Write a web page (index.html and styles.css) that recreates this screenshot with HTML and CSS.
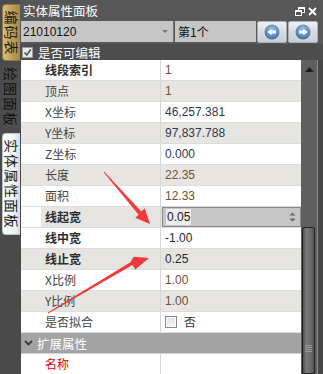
FILE: index.html
```html
<!DOCTYPE html>
<html>
<head>
<meta charset="utf-8">
<link rel="stylesheet" href="styles.css">
</head>
<body>
<div class="tabs">
  <div class="tab tab-gold"><span>编码表</span></div>
  <div class="tab tab-dark"><span>绘图面板</span></div>
  <div class="tab tab-active"><span>实体属性面板</span></div>
</div>
<div class="panel">
  <div class="titlebar">
    <span class="title">实体属性面板</span>
    <span class="winbtns">
      <svg width="10" height="9" viewBox="0 0 10 9"><rect x="3.5" y="0.5" width="6" height="5" fill="none" stroke="#fff" stroke-width="1"/><rect x="3.5" y="0.5" width="6" height="1.5" fill="#fff"/><rect x="0.5" y="3.5" width="6" height="5" fill="#565656" stroke="#fff" stroke-width="1"/><rect x="0.5" y="3.5" width="6" height="1.5" fill="#fff"/></svg>
      <svg width="9" height="9" viewBox="0 0 9 9"><path d="M1 1L8 8M8 1L1 8" stroke="#fff" stroke-width="1.8"/></svg>
    </span>
  </div>
  <div class="toolbar">
    <div class="combo"><span>21010120</span><span class="drop"></span></div>
    <div class="combo2">第1个</div>
    <div class="navbtn">
      <svg width="16" height="16" viewBox="0 0 16 16"><defs><radialGradient id="g1" cx="50%" cy="35%" r="65%"><stop offset="0" stop-color="#9cc4e6"/><stop offset="1" stop-color="#3b6fa6"/></radialGradient></defs><circle cx="8" cy="8" r="7.5" fill="url(#g1)"/><path d="M3.5 8L7.5 4.5V6.6H12V9.4H7.5V11.5Z" fill="#fff"/></svg>
    </div>
    <div class="navbtn">
      <svg width="16" height="16" viewBox="0 0 16 16"><defs><radialGradient id="g2" cx="50%" cy="35%" r="65%"><stop offset="0" stop-color="#9cc4e6"/><stop offset="1" stop-color="#3b6fa6"/></radialGradient></defs><circle cx="8" cy="8" r="7.5" fill="url(#g2)"/><path d="M12.5 8L8.5 4.5V6.6H4V9.4H8.5V11.5Z" fill="#fff"/></svg>
    </div>
  </div>
  <div class="editrow">
    <span class="cb checked"><svg width="9" height="9" viewBox="0 0 9 9"><path d="M1.5 4.5L3.8 7L7.8 1.5" fill="none" stroke="#555" stroke-width="1.6"/></svg></span>
    <span class="editlabel">是否可编辑</span>
  </div>
  <div class="content">
    <div class="grid">
      <div class="row w"><span class="ind"></span><span class="lbl b">线段索引</span><span class="div"></span><span class="val br">1</span></div>
      <div class="row g"><span class="ind"></span><span class="lbl">顶点</span><span class="div"></span><span class="val br">1</span></div>
      <div class="row w"><span class="ind"></span><span class="lbl">X坐标</span><span class="div"></span><span class="val">46,257.381</span></div>
      <div class="row g"><span class="ind"></span><span class="lbl">Y坐标</span><span class="div"></span><span class="val">97,837.788</span></div>
      <div class="row w"><span class="ind"></span><span class="lbl">Z坐标</span><span class="div"></span><span class="val">0.000</span></div>
      <div class="row g"><span class="ind"></span><span class="lbl">长度</span><span class="div"></span><span class="val br">22.35</span></div>
      <div class="row w"><span class="ind"></span><span class="lbl">面积</span><span class="div"></span><span class="val br">12.33</span></div>
      <div class="row g sel"><span class="ind"></span><span class="lbl b">线起宽</span><span class="div"></span><span class="val edit"><span class="spin"><span class="seltext">0.05</span><span class="arrows"><svg width="7" height="12" viewBox="0 0 7 12"><path d="M0.5 4.5L3.5 1.5L6.5 4.5Z M0.5 7.5L3.5 10.5L6.5 7.5Z" fill="#666"/></svg></span></span></span></div>
      <div class="row w"><span class="ind"></span><span class="lbl b">线中宽</span><span class="div"></span><span class="val dk">-1.00</span></div>
      <div class="row g"><span class="ind"></span><span class="lbl b">线止宽</span><span class="div"></span><span class="val dk">0.25</span></div>
      <div class="row w"><span class="ind"></span><span class="lbl">X比例</span><span class="div"></span><span class="val br">1.00</span></div>
      <div class="row g"><span class="ind"></span><span class="lbl">Y比例</span><span class="div"></span><span class="val br">1.00</span></div>
      <div class="row w"><span class="ind"></span><span class="lbl">是否拟合</span><span class="div"></span><span class="val"><span class="cb2"></span><span class="no">否</span></span></div>
      <div class="cat"><svg width="9" height="6" viewBox="0 0 9 6"><path d="M1 1L4.5 4.5L8 1" fill="none" stroke="#3a3a3a" stroke-width="1.8"/></svg><span>扩展属性</span></div>
      <div class="row w"><span class="ind"></span><span class="lbl red">名称</span><span class="div"></span><span class="val"></span></div>
    </div>
    <div class="scroll">
      <div class="sb-up"><svg width="9" height="5" viewBox="0 0 9 5"><path d="M0 5L4.5 0L9 5Z" fill="#1e1e1e"/></svg></div>
      <div class="sb-space"></div>
      <div class="sb-thumb"><span class="grip"></span></div>
    </div>
    <div class="edge"></div>
  </div>
</div>
<svg class="arrows-overlay" width="323" height="374" viewBox="0 0 323 374">
  <polygon points="103.6,172.3 104.4,171.7 141.2,211.6 144.8,208.4 150,224 135.3,217.8 138.6,214.8" fill="#f23a3a"/>
  <polygon points="47.8,312.6 48.2,313.4 132.5,264.9 135.2,269.5 149,258 133.6,256.7 130.4,262.3" fill="#f23a3a"/>
</svg>
</body>
</html>
```
FILE: styles.css
```css
html, body {
  margin: 0;
  padding: 0;
}
body {
  width: 323px;
  height: 374px;
  overflow: hidden;
  display: flex;
  background: #4a4a4a;
  font-family: "Liberation Sans", "Noto Sans CJK SC", sans-serif;
  font-size: 12px;
  position: relative;
}
.tabs {
  width: 20px;
  flex: none;
  display: flex;
  flex-direction: column;
  padding-top: 4px;
  gap: 4px;
  background: #4a4a4a;
}
.tab {
  margin-left: 2px;
  width: 18px;
  box-sizing: border-box;
  display: flex;
  align-items: center;
  justify-content: center;
  color: #1a1a1a;
  border-radius: 4px 0 0 4px;
}
.tab span {
  flex: none;
  white-space: nowrap;
  font-family: "Noto Sans CJK SC", sans-serif;
  font-size: 14px;
  line-height: 16px;
  letter-spacing: 1px;
  transform: rotate(90deg);
}
.tab-gold {
  height: 57px;
  background: linear-gradient(to right, #d6bd7e, #b99a52 60%, #a6884a);
  border: 1px solid #8d7640;
  border-right: none;
}
.tab-dark {
  height: 64px;
  background: #4e4e4e;
  color: #111;
}
.tab-active {
  height: 102px;
  background: linear-gradient(to right, #ffffff, #eef2f5 70%, #cfdde6);
  border: 1px solid #bcc8cf;
  border-right: none;
}
.panel {
  flex: 1;
  display: flex;
  flex-direction: column;
  min-width: 0;
}
.titlebar {
  height: 21px;
  flex: none;
  display: flex;
  align-items: center;
  justify-content: space-between;
  background: #575757;
  padding: 0 6px 0 3px;
}
.title {
  color: #fff;
  font-family: "Noto Sans CJK SC", sans-serif;
  font-size: 12.5px;
}
.winbtns {
  display: flex;
  gap: 3px;
  align-items: center;
  padding-top: 2px;
}
.winbtns svg { display: block; }
.toolbar {
  height: 23px;
  flex: none;
  display: flex;
  background: #575757;
  padding-left: 1px;
}
.combo {
  width: 153px;
  height: 21px;
  background: #c6c6c6;
  display: flex;
  align-items: center;
  justify-content: space-between;
  padding-left: 2px;
  box-sizing: border-box;
  color: #111;
  font-size: 12px;
  border-right: 1px solid #777;
}
.drop {
  width: 0;
  height: 0;
  border-left: 3px solid transparent;
  border-right: 3px solid transparent;
  border-top: 3px solid #777;
  margin-right: 5px;
}
.combo2 {
  width: 81px;
  height: 21px;
  margin-left: 1px;
  background: #c6c6c6;
  box-sizing: border-box;
  display: flex;
  align-items: center;
  padding-left: 3px;
  color: #111;
  font-family: "Noto Sans CJK SC", sans-serif;
  font-size: 12px;
}
.navbtn {
  width: 30px;
  height: 22px;
  margin-left: 1px;
  box-sizing: border-box;
  border: 1px solid #a8b0b6;
  border-radius: 2px;
  background: linear-gradient(#eef1f3, #d3d9de 55%, #c8cfd5);
  display: flex;
  align-items: center;
  justify-content: center;
}
.navbtn svg { display: block; }
.editrow {
  height: 16px;
  flex: none;
  display: flex;
  align-items: center;
  background: #4d4d4d;
  padding-left: 2px;
}
.cb {
  width: 11px;
  height: 11px;
  box-sizing: border-box;
  background: #e8e8e8;
  border: 1px solid #9a9a9a;
  display: flex;
  align-items: center;
  justify-content: center;
}
.cb svg { display: block; }
.editlabel {
  color: #fff;
  margin-left: 5px;
  font-family: "Noto Sans CJK SC", sans-serif;
  font-size: 12.5px;
}
.content {
  flex: 1;
  display: flex;
  min-height: 0;
}
.grid {
  width: 280px;
  margin-left: 1px;
  flex: none;
  display: flex;
  flex-direction: column;
  background: #fff;
}
.row {
  height: 21px;
  flex: none;
  box-sizing: border-box;
  display: grid;
  grid-template-columns: 20px 119px 1px 140px;
  border-bottom: 1px solid #dcdcdc;
}
.row.w { background: #fff; }
.row.g { background: #e7e5e1; }
.row.sel .ind { background: #fff; }
.lbl {
  padding-left: 4px;
  line-height: 20px;
  color: #464646;
  font-family: "Noto Sans CJK SC", sans-serif;
  font-size: 12px;
  white-space: nowrap;
}
.lbl.b { font-weight: bold; color: #2e2e2e; }
.lbl.red { color: #e80000; }
.div { background: #d6d6d6; }
.val {
  padding-left: 4px;
  line-height: 20px;
  color: #2e3a52;
  font-size: 12px;
  display: flex;
  align-items: center;
}
.val.br { color: #6e5033; }
.val.dk { color: #2a2a2a; }
.val.edit {
  padding: 0 0 0 1px;
}
.spin {
  width: 139px;
  height: 20px;
  box-sizing: border-box;
  border: 1px solid #888;
  background: #c6c6c6;
  display: flex;
  align-items: center;
  justify-content: space-between;
  padding-left: 3px;
  padding-right: 4px;
}
.seltext {
  background: #ececec;
  color: #222;
  line-height: 16px;
  padding: 0 1px;
  font-size: 12px;
}
.arrows svg { display: block; }
.cb2 {
  width: 12px;
  height: 12px;
  box-sizing: border-box;
  border: 1px solid #8a8a8a;
  background: linear-gradient(#e4e4e4, #f4f4f4);
  box-shadow: inset 0 0 0 1px #fff;
}
.no {
  margin-left: 7px;
  color: #333;
  font-family: "Noto Sans CJK SC", sans-serif;
}
.cat {
  height: 21px;
  flex: none;
  box-sizing: border-box;
  background: #a3a3a3;
  border-bottom: 1px solid #d0d0d0;
  display: flex;
  align-items: center;
  padding-left: 3px;
}
.cat svg { display: block; }
.cat span {
  color: #fff;
  margin-left: 4px;
  font-family: "Noto Sans CJK SC", sans-serif;
  font-size: 12.5px;
}
.scroll {
  width: 16px;
  flex: none;
  display: flex;
  flex-direction: column;
  background: #5f5f5f;
}
.sb-up {
  height: 18px;
  flex: none;
  display: flex;
  justify-content: center;
  align-items: center;
  padding-left: 1px;
}
.sb-up svg { display: block; }
.sb-space { height: 149px; flex: none; }
.sb-thumb {
  flex: 1;
  margin: 0 2px 0 1px;
  box-sizing: border-box;
  border: 1px solid #222;
  border-radius: 2px 2px 0 0;
  background: linear-gradient(to right, #4e4e4e, #7a7a7a 30%, #6a6a6a 70%, #525252);
  display: flex;
  justify-content: center;
  padding-top: 117px;
}
.grip {
  width: 7px;
  height: 7px;
  background: repeating-linear-gradient(#9a9a9a 0 1px, transparent 1px 2px);
}
.edge {
  width: 6px;
  flex: none;
  border-left: 1px solid #8a8a8a;
  box-sizing: border-box;
  background: #474747;
}
.arrows-overlay {
  position: absolute;
  left: 0;
  top: 0;
  pointer-events: none;
}
```
